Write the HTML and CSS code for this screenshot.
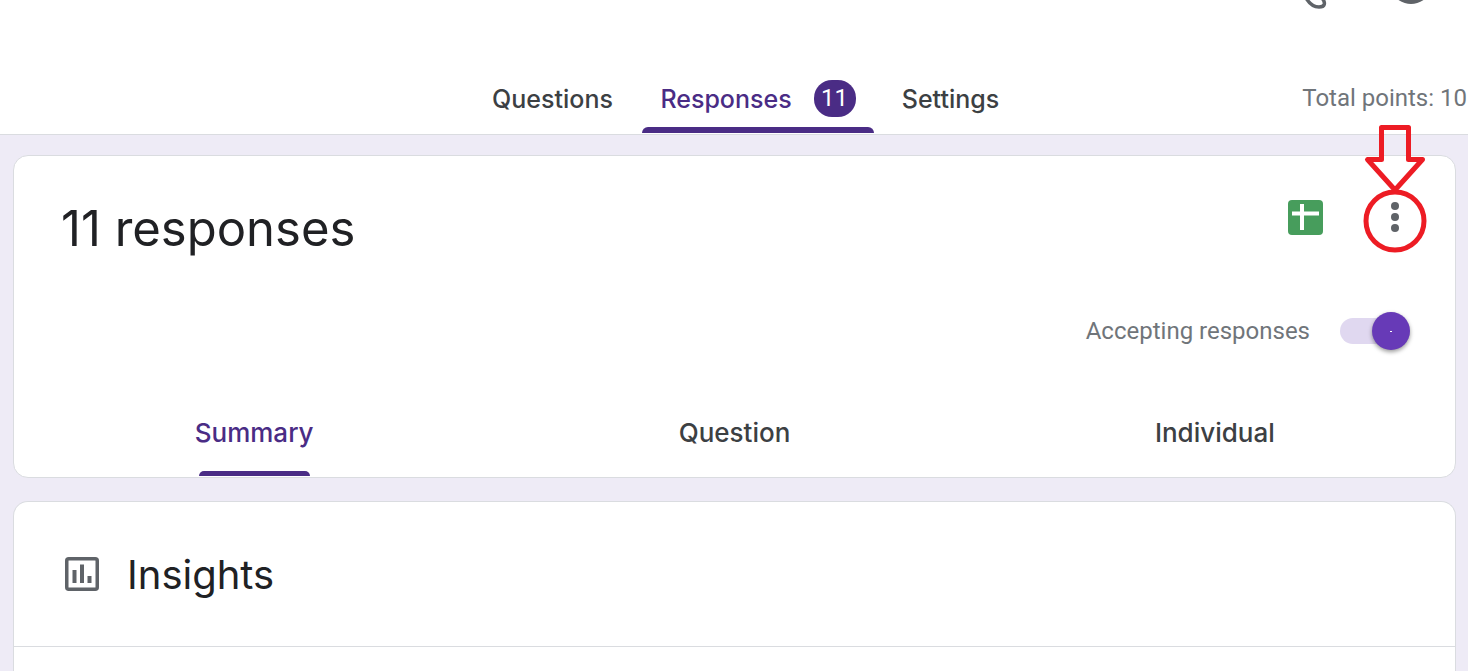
FILE: index.html
```html
<!DOCTYPE html>
<html lang="en">
<head>
<meta charset="utf-8">
<title>Form responses</title>
<link rel="stylesheet" href="styles.css">
</head>
<body>
<header class="header">
  <div class="toolbar">
    <button class="tool" aria-label="Customize theme">
      <svg width="24" height="10" viewBox="0 0 24 10"><path d="M2 -2C5 3 10 7 15 7C21 7 22 3 18 -2" fill="none" stroke="#5f6368" stroke-width="3.500"/></svg>
    </button>
    <button class="tool" aria-label="Preview">
      <svg width="30" height="10" viewBox="0 0 30 10"><path d="M1 -1Q8 4 15 4Q22 4 29 -1Z" fill="#5f6368"/></svg>
    </button>
  </div>
  <div class="header-row">
    <nav class="tabs">
      <button class="tab tab-questions">Questions</button>
      <button class="tab tab-responses active">Responses <span class="badge">11</span></button>
      <button class="tab tab-settings">Settings</button>
    </nav>
    <div class="points">Total points: 10</div>
  </div>
</header>
<main class="content">
  <section class="card">
    <div class="card-head">
      <h1 class="title">11 responses</h1>
      <div class="actions">
        <button class="icon-button" aria-label="View in Sheets">
          <svg width="35" height="35" viewBox="0 0 35 35"><rect width="35" height="35" rx="4" fill="#479d5c"/><path d="M4 13.500H31M14 4V30" stroke="#fff" stroke-width="4"/></svg>
        </button>
        <div class="menu">
          <button class="icon-button" aria-label="More options">
            <svg width="8" height="35" viewBox="0 0 8 35"><g fill="#5f6368"><circle cx="4" cy="6" r="4"/><circle cx="4" cy="17" r="4"/><circle cx="4" cy="28" r="4"/></g></svg>
          </button>
          <svg class="callout" width="66" height="132" viewBox="0 0 66 132" fill="none" stroke="#ed1c24" stroke-width="5" stroke-linejoin="round"><path d="M19.500 3.500H46.500V35.500H60.500L33 66L5.500 35.500H19.500Z"/><circle cx="33" cy="97" r="29"/></svg>
        </div>
      </div>
    </div>
    <label class="accepting">Accepting responses <input class="switch" type="checkbox" role="switch" checked></label>
    <nav class="subtabs">
      <button class="subtab active">Summary</button>
      <button class="subtab">Question</button>
      <button class="subtab">Individual</button>
    </nav>
  </section>
  <section class="card card-insights">
    <div class="insights">
      <svg width="34" height="34" viewBox="0 0 34 34"><rect x="1.750" y="1.750" width="30.500" height="30.500" rx="2" fill="none" stroke="#5f6368" stroke-width="3.500"/><path d="M7.500 13h4v13h-4zM15 7.500h4v18.500h-4zM22.500 19h4v7h-4z" fill="#5f6368"/></svg>
      <h2 class="subtitle">Insights</h2>
    </div>
  </section>
</main>
</body>
</html>
```

FILE: styles.css
```css
* {
  box-sizing: border-box;
}

body {
  display: flex;
  flex-direction: column;
  margin: 0;
  min-height: 100vh;
  background: #eeebf6;
  color: #202124;
  font-family: Inter, "Liberation Sans", sans-serif;
}

button {
  padding: 0;
  border: 0;
  background: none;
  color: inherit;
  font: inherit;
  cursor: pointer;
}

svg {
  display: block;
}

.header {
  background: #fff;
  border-bottom: 1px solid #dadce0;
}

.toolbar {
  display: flex;
  justify-content: flex-end;
  gap: 68px;
  height: 64px;
  padding-right: 42px;
}

.tool {
  display: flex;
  align-items: flex-start;
}

.header-row {
  display: grid;
  grid-template-columns: 1fr auto 1fr;
  padding-left: 22px;
}

.tabs {
  display: flex;
  grid-column: 2;
  gap: 8px;
}

.tab {
  display: flex;
  align-items: center;
  justify-content: center;
  height: 70px;
  border-bottom: 1px solid transparent;
  color: #3c4043;
  font-size: 25px;
  font-weight: 500;
}

.tab-questions {
  min-width: 163px;
}

.tab-responses {
  min-width: 232px;
  gap: 22px;
}

.tab-settings {
  min-width: 137px;
}

.tab.active,
.subtab.active {
  color: #4a2c85;
}

.tab.active {
  position: relative;
}

.tab.active::after {
  content: "";
  position: absolute;
  right: 0;
  bottom: 0;
  left: 0;
  height: 6px;
  border-radius: 6px 6px 0 0;
  background: #4a2c85;
}

.badge {
  width: 42px;
  border-radius: 18px;
  background: #4a2c85;
  color: #fff;
  font: 24px/37px Roboto, sans-serif;
}

.points {
  align-self: center;
  justify-self: end;
  padding: 0 1px 2px 0;
  color: #70757a;
  font: 24px/32px Roboto, sans-serif;
}

.content {
  display: flex;
  flex: 1;
  flex-direction: column;
  gap: 23px;
  padding: 20px 12px 0 13px;
}

.card {
  border: 1px solid #dadce0;
  border-radius: 15px;
  background: #fff;
}

.card-head {
  display: flex;
  align-items: flex-start;
  justify-content: space-between;
  padding: 43px 56px 0 47px;
}

.title {
  margin: 0;
  font-size: 49px;
  font-weight: 400;
  line-height: 60px;
}

.actions {
  display: flex;
  align-items: flex-start;
  gap: 68px;
  padding-top: 1px;
}

.menu {
  position: relative;
}

.callout {
  position: absolute;
  top: -76px;
  left: -29px;
  pointer-events: none;
}

.accepting {
  display: flex;
  align-items: center;
  justify-content: flex-end;
  gap: 30px;
  margin-top: 53px;
  padding-right: 45px;
  color: #70757a;
  font: 24px/38px Roboto, sans-serif;
}

.switch {
  display: flex;
  align-items: center;
  justify-content: flex-end;
  appearance: none;
  width: 70px;
  height: 26px;
  margin: 0;
  border-radius: 13px;
  background: #e0d8f0;
}

.switch::before {
  content: "";
  width: 38px;
  height: 38px;
  border-radius: 50%;
  background: linear-gradient(#fff, #fff) center / 2px 1px no-repeat #673ab7;
  box-shadow: 0 2px 4px #0006;
}

.subtabs {
  display: grid;
  grid-template-columns: repeat(3, 1fr);
  justify-items: center;
  margin-top: 39px;
}

.subtab {
  height: 88px;
  padding-bottom: 2px;
  color: #3c4043;
  font-size: 26px;
  font-weight: 500;
}

.subtab.active {
  position: relative;
}

.subtab.active::after {
  content: "";
  position: absolute;
  right: 4px;
  bottom: 1px;
  left: 4px;
  height: 5px;
  border-radius: 5px 5px 0 0;
  background: #4a2c85;
}

.card-insights {
  flex: 1;
  border-bottom: 0;
  border-radius: 15px 15px 0 0;
}

.insights {
  display: flex;
  align-items: center;
  gap: 28px;
  height: 145px;
  padding-left: 51px;
  border-bottom: 1px solid #dadce0;
}

.subtitle {
  margin: 0;
  font-size: 40px;
  font-weight: 400;
}
```
